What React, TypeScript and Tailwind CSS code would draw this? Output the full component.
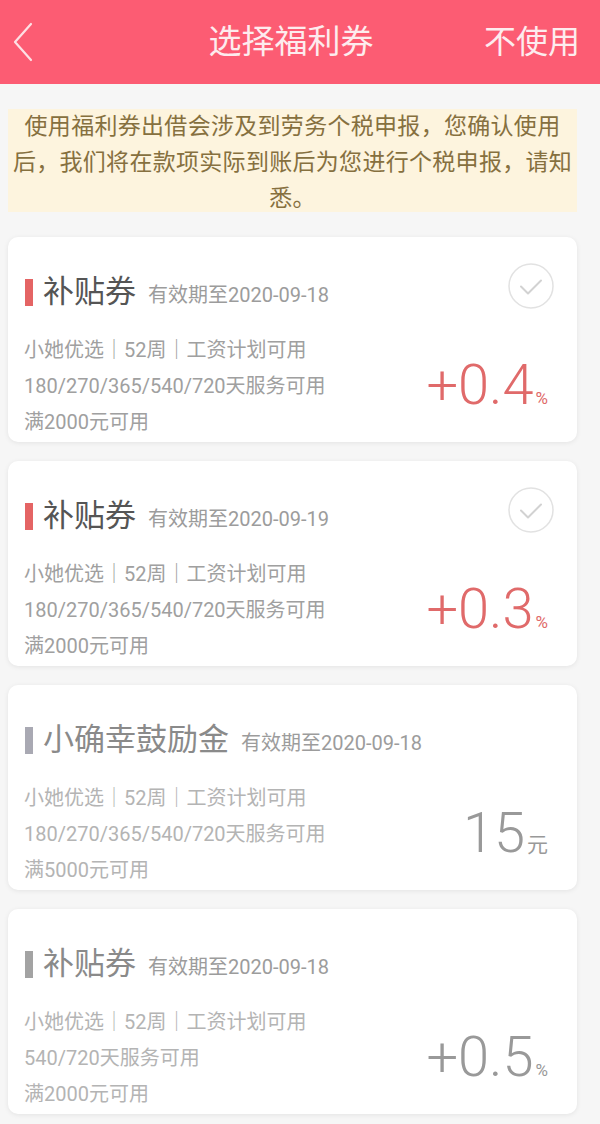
import React from 'react';

interface Coupon {
  title: string;
  expiry: string;
  lines: string[];
  value: string;
  unit: string;
  active: boolean;
  barColor: string;
}

const coupons: Coupon[] = [
  {
    title: '补贴券',
    expiry: '有效期至2020-09-18',
    lines: ['小她优选｜52周｜工资计划可用', '180/270/365/540/720天服务可用', '满2000元可用'],
    value: '+0.4',
    unit: '%',
    active: true,
    barColor: 'bg-[#e46464]',
  },
  {
    title: '补贴券',
    expiry: '有效期至2020-09-19',
    lines: ['小她优选｜52周｜工资计划可用', '180/270/365/540/720天服务可用', '满2000元可用'],
    value: '+0.3',
    unit: '%',
    active: true,
    barColor: 'bg-[#e46464]',
  },
  {
    title: '小确幸鼓励金',
    expiry: '有效期至2020-09-18',
    lines: ['小她优选｜52周｜工资计划可用', '180/270/365/540/720天服务可用', '满5000元可用'],
    value: '15',
    unit: '元',
    active: false,
    barColor: 'bg-[#a9a9b3]',
  },
  {
    title: '补贴券',
    expiry: '有效期至2020-09-18',
    lines: ['小她优选｜52周｜工资计划可用', '540/720天服务可用', '满2000元可用'],
    value: '+0.5',
    unit: '%',
    active: false,
    barColor: 'bg-[#a3a3a3]',
  },
];

const CheckCircle = () => (
  <svg width="46" height="46" viewBox="0 0 46 46" fill="none">
    <circle cx="23" cy="23" r="22" stroke="#e2e2e2" strokeWidth="1.5" />
    <path d="M13 23.5l7 7 13-13" stroke="#d2d2d2" strokeWidth="2" strokeLinecap="round" strokeLinejoin="round" />
  </svg>
);

const CouponCard: React.FC<{ coupon: Coupon }> = ({ coupon }) => {
  const titleColor = coupon.active ? 'text-[#555555]' : 'text-[#8a8a8a]';
  const lineColor = coupon.active ? 'text-[#a0a0a0]' : 'text-[#b4b4b4]';
  const valueColor = coupon.active ? 'text-[#e06a6a]' : 'text-[#999999]';

  return (
    <div className="flex justify-between h-[205px] w-[569px] ml-[8px] bg-white rounded-[10px] shadow-[0_1px_5px_rgba(0,0,0,0.08)] overflow-hidden">
      <div className="pl-[17px] pt-[35px]">
        <div className="flex items-center h-[40px]">
          <span className={`w-[8px] h-[27px] ${coupon.barColor}`} />
          <span className={`ml-[10px] text-[31px] leading-[40px] ${titleColor}`}>{coupon.title}</span>
          <span className="ml-[12px] mt-[6px] text-[20px] text-[#9c9c9c]">{coupon.expiry}</span>
        </div>
        <div className={`mt-[20px] text-[20px] leading-[36px] -ml-[1px] ${lineColor}`}>
          {coupon.lines.map((line, i) => (
            <div key={i} className="whitespace-nowrap">{line}</div>
          ))}
        </div>
      </div>
      <div className="flex flex-col items-end pt-[26px] pr-[23px]">
        {coupon.active ? <CheckCircle /> : <div className="h-[46px]" />}
        <div className={`flex items-baseline mt-[48px] pr-[6px] ${valueColor}`}>
          <span className="text-[56px] leading-[56px] font-light">{coupon.value}</span>
          <span className={coupon.unit === '%' ? 'ml-[2px] text-[17px]' : 'ml-[2px] text-[21px]'}>{coupon.unit}</span>
        </div>
      </div>
    </div>
  );
};

export default function App() {
  return (
    <div className="w-[600px] h-[1124px] overflow-hidden bg-[#f6f6f6] font-['Roboto','Noto_Sans_CJK_SC',sans-serif]">
      <div className="flex items-center h-[84px] bg-[#fc5c73] text-white">
        <div className="w-[98px] pl-[12px] flex items-center">
          <svg width="22" height="40" viewBox="0 0 22 40" fill="none">
            <path d="M19 2L3 20l16 18" stroke="#fde0e4" strokeWidth="2.2" strokeLinecap="round" strokeLinejoin="round" />
          </svg>
        </div>
        <div className="flex-1 text-center text-[33px] text-[#fdecee]">选择福利券</div>
        <div className="pr-[20px] text-[32px] text-[#fdecee]">不使用</div>
      </div>

      <div className="mt-[25px] ml-[8px] w-[569px] h-[103px] bg-[#fdf4de] px-[4px] text-center text-[23px] tracking-[0.3px] leading-[36px] text-[#86703f]">
        使用福利券出借会涉及到劳务个税申报，您确认使用后，我们将在款项实际到账后为您进行个税申报，请知悉。
      </div>

      <div className="flex flex-col gap-[19px] mt-[25px]">
        {coupons.map((c, i) => (
          <CouponCard key={i} coupon={c} />
        ))}
      </div>
    </div>
  );
}
